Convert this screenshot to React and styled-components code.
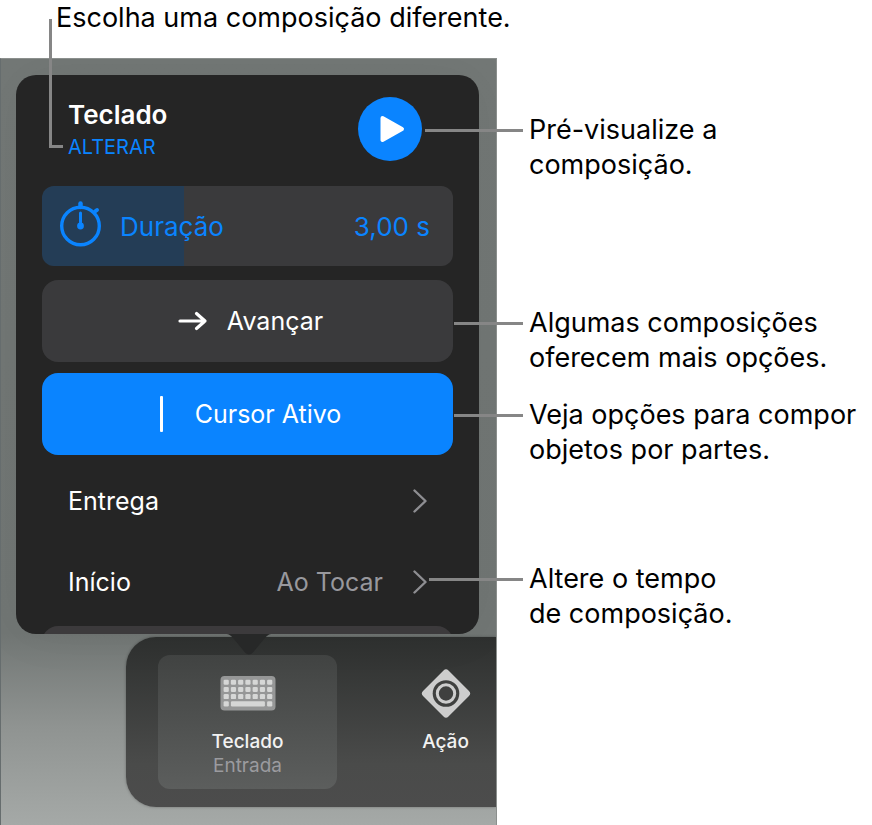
import React, { useState } from 'react';
import styled, { createGlobalStyle, css } from 'styled-components';

const BLUE = '#0a84ff';
const LEADER = '#868686';

const GlobalStyle = createGlobalStyle`
  *, *::before, *::after {
    box-sizing: border-box;
  }

  body {
    margin: 0;
    overflow-x: hidden;
    background: #fff;
    color: #000;
    font-family: Inter, Roboto, sans-serif;
    font-size: 25px;
  }

  button {
    border: none;
    padding: 0;
    background: transparent;
    font: inherit;
    cursor: pointer;
  }
`;

const Page = styled.main`
  min-height: 100vh;
`;

const TopNote = styled.p`
  position: relative;
  margin: 0;
  padding-left: 56px;
  height: 58px;
  font-size: 27px;
  line-height: 35px;

  &::before {
    content: '';
    position: absolute;
    z-index: 2;
    top: 19px;
    left: 49px;
    width: 14px;
    height: 129px;
    border-left: 3px solid ${LEADER};
    border-bottom: 3px solid ${LEADER};
  }
`;

const Columns = styled.div`
  display: grid;
  grid-template-columns: 497fr 375fr;
`;

const Screen = styled.section`
  overflow: hidden;
  padding: 16px 0 18px;
  border-top: 1px solid #8b8f8d;
  border-left: 1px solid #666d6e;
  border-right: 1px solid #8b8f8d;
  background: linear-gradient(#737876 0, #717674 75%, #8f9391 87%, #a5a9a7 100%);
`;

const Popover = styled.div`
  position: relative;
  z-index: 1;
  margin: 0 17px 3px 15px;
  border-radius: 20px;
  background: #252525;
  box-shadow: 0 0 50px rgba(0, 0, 0, 0.06);
`;

const PopoverBody = styled.div`
  overflow: hidden;
  padding: 0 26px;
  border-radius: 20px;
`;

const Tail = styled.svg`
  position: absolute;
  top: 100%;
  left: 50%;
  width: 48px;
  height: 21px;
  margin-left: -23px;
`;

const Header = styled.header`
  display: flex;
  justify-content: space-between;
  align-items: flex-start;
  padding: 22px 31px 25px 26px;
`;

const Title = styled.h1`
  margin: 0;
  color: #fff;
  font-size: 26px;
  font-weight: 600;
  line-height: 36px;
`;

const ChangeButton = styled.button`
  display: block;
  color: ${BLUE};
  font-size: 20px;
  line-height: 28px;
`;

const PlayButton = styled.button`
  flex: none;
  width: 64px;
  height: 64px;

  svg {
    display: block;
  }
`;

const DurationField = styled.div`
  position: relative;
  display: flex;
  align-items: center;
  height: 80px;
  margin-bottom: 14px;
  padding: 0 23px 0 17px;
  color: ${BLUE};
  font-size: 26px;

  svg, label, output {
    position: relative;
    pointer-events: none;
  }

  label {
    flex: 1;
    margin-left: 15px;
  }
`;

const DurationSlider = styled.input`
  position: absolute;
  inset: 0;
  width: 100%;
  height: 100%;
  margin: 0;
  appearance: none;
  border-radius: 12px;
  background: linear-gradient(to right, #243d56 var(--filled), #3a3a3c 0);
  cursor: pointer;

  &::-webkit-slider-thumb {
    appearance: none;
    width: 1px;
    height: 80px;
  }
`;

const OptionButton = styled.button`
  display: flex;
  justify-content: center;
  align-items: center;
  gap: ${props => props.$gap};
  width: 100%;
  height: 82px;
  margin-bottom: 11px;
  padding-left: 6px;
  border-radius: 16px;
  background: ${props => (props.$active ? BLUE : '#3a3a3c')};
  color: #fff;
`;

const List = styled.div`
  margin-top: -6px;
`;

const RowButton = styled.button`
  display: flex;
  align-items: center;
  width: 100%;
  height: 81px;
  padding: 0 26px;
  color: #fff;
  text-align: left;
`;

const RowLabel = styled.span`
  flex: 1;
`;

const RowValue = styled.span`
  margin-right: 30px;
  color: #98989d;
`;

const NextOption = styled.div`
  overflow: hidden;
  height: 12px;
  padding-top: 4px;

  &::before {
    content: '';
    display: block;
    height: 40px;
    border-radius: 16px;
    background: #3c3a3c;
  }
`;

const Toolbar = styled.nav`
  display: flex;
  gap: 19px;
  margin-left: 125px;
  padding: 18px 0 18px 32px;
  border-radius: 30px 0 0 30px;
  background: linear-gradient(#2e302f, #4a4b4a 75%, #4c4c4c);
  box-shadow: 0 0 3px rgba(0, 0, 0, 0.3);
`;

const ToolbarItem = styled.button`
  display: flex;
  flex: none;
  flex-direction: column;
  align-items: center;
  width: 179px;
  height: 134px;
  padding-top: 10px;
  border-radius: 12px;
  color: #f2f2f2;
  font-size: 19px;
  font-weight: 500;
  line-height: 24px;
  ${props => props.$selected && css`
    background: linear-gradient(#424443, #5c5e5d);
  `};

  svg {
    margin-bottom: 9px;
  }
`;

const ItemDetail = styled.span`
  color: #9b9b9f;
  font-weight: 400;
`;

const Notes = styled.aside`
  padding-left: 32px;
  font-size: 27px;
`;

const Note = styled.p`
  position: relative;
  margin: ${props => props.$space} 0 0;
  line-height: 35px;
  white-space: nowrap;

  &::before {
    content: '';
    position: absolute;
    z-index: 2;
    top: 17px;
    right: calc(100% + 6px);
    width: ${props => props.$leader};
    height: 3px;
    background: ${LEADER};
  }
`;

const PlayIcon = () => (
  <svg width="64" height="64" viewBox="0 0 64 64" aria-hidden="true">
    <circle cx="32" cy="32" r="32" fill={BLUE} />
    <path d="M24.5 21 L44 32 L24.5 43 Z" fill="#fff" stroke="#fff" strokeWidth="4" strokeLinejoin="round" />
  </svg>
);

const TimerIcon = () => (
  <svg width="46" height="50" viewBox="0 0 46 50" fill="none" stroke={BLUE} strokeLinecap="round" aria-hidden="true">
    <circle cx="21.5" cy="25" r="18.8" strokeWidth="3.4" />
    <path d="M21.5 2.5V6" strokeWidth="4.5" />
    <path d="M36 10.5L38 9" strokeWidth="4" />
    <path d="M21.5 12V24" strokeWidth="3" />
    <circle cx="21.5" cy="25" r="3.4" fill={BLUE} stroke="none" />
  </svg>
);

const ArrowIcon = () => (
  <svg width="30" height="20" viewBox="0 0 30 20" fill="none" stroke="#fff" strokeWidth="3.2" strokeLinecap="round" strokeLinejoin="round" aria-hidden="true">
    <path d="M2 10H27M18.5 2.5L27 10L18.5 17.5" />
  </svg>
);

const CaretIcon = () => (
  <svg width="3" height="36" viewBox="0 0 3 36" aria-hidden="true">
    <rect width="3" height="36" rx="1" fill="#fff" />
  </svg>
);

const Chevron = () => (
  <svg width="14" height="24" viewBox="0 0 14 24" fill="none" stroke="#8e8e92" strokeWidth="2.4" strokeLinecap="round" strokeLinejoin="round" aria-hidden="true">
    <path d="M1.5 1.5L12.5 12L1.5 22.5" />
  </svg>
);

const KEYS = [0, 1, 2, 3, 4, 5, 6];

const KeyboardIcon = () => (
  <svg width="56" height="56" viewBox="0 0 56 56" aria-hidden="true">
    <rect x="0.5" y="11" width="55" height="34.5" rx="4" fill="#969797" />
    <g fill="#d6d7d6">
      {[0, 1, 2].map(row => KEYS.map(col => (
        <rect key={`${row}-${col}`} x={3.6 + (col * 7.25)} y={14.7 + (row * 7.2)} width="5.2" height="5" rx="1.2" />
      )))}
      <rect x="3.6" y="36.3" width="5.2" height="5.2" rx="1.2" />
      <rect x="10.9" y="36.3" width="34" height="5.2" rx="1.2" />
      <rect x="47.1" y="36.3" width="5.2" height="5.2" rx="1.2" />
    </g>
  </svg>
);

const ActionIcon = () => (
  <svg width="56" height="56" viewBox="0 0 56 56" aria-hidden="true">
    <rect x="10" y="10.5" width="36" height="36" rx="3.5" transform="rotate(45 28 28.5)" fill="#cdcdcd" />
    <circle cx="28" cy="28.5" r="13.3" fill="#3f403f" />
    <circle cx="28" cy="28.5" r="8.7" fill="none" stroke="#cdcdcd" strokeWidth="3" />
  </svg>
);

const App = () => {
  const [duration, setDuration] = useState(3);
  const [cursorOn, setCursorOn] = useState(true);

  return (
    <Page>
      <GlobalStyle />
      <TopNote>Escolha uma composição diferente.</TopNote>
      <Columns>
        <Screen>
          <Popover>
            <PopoverBody>
              <Header>
                <div>
                  <Title>Teclado</Title>
                  <ChangeButton type="button">ALTERAR</ChangeButton>
                </div>
                <PlayButton type="button" aria-label="Pré-visualizar">
                  <PlayIcon />
                </PlayButton>
              </Header>
              <DurationField>
                <DurationSlider
                  id="duration"
                  type="range"
                  min="0"
                  max="8.7"
                  step="0.05"
                  value={duration}
                  onChange={({ target }) => setDuration(Number(target.value))}
                  style={{ '--filled': `${(duration / 8.7) * 100}%` }}
                />
                <TimerIcon />
                <label htmlFor="duration">Duração</label>
                <output htmlFor="duration">{`${duration.toFixed(2).replace('.', ',')} s`}</output>
              </DurationField>
              <OptionButton type="button" $gap="19px">
                <ArrowIcon />
                Avançar
              </OptionButton>
              <OptionButton
                type="button"
                $gap="32px"
                $active={cursorOn}
                aria-pressed={cursorOn}
                onClick={() => setCursorOn(!cursorOn)}
              >
                <CaretIcon />
                Cursor Ativo
              </OptionButton>
              <List>
                <RowButton type="button">
                  <RowLabel>Entrega</RowLabel>
                  <Chevron />
                </RowButton>
                <RowButton type="button">
                  <RowLabel>Início</RowLabel>
                  <RowValue>Ao Tocar</RowValue>
                  <Chevron />
                </RowButton>
              </List>
              <NextOption />
            </PopoverBody>
            <Tail viewBox="0 0 48 21" aria-hidden="true">
              <path d="M0 0C5 0 6 2 9 5L20 18.5Q24 22.5 28 18.5L39 5C42 2 43 0 48 0Z" fill="#272828" />
            </Tail>
          </Popover>
          <Toolbar>
            <ToolbarItem type="button" $selected>
              <KeyboardIcon />
              <span>Teclado</span>
              <ItemDetail>Entrada</ItemDetail>
            </ToolbarItem>
            <ToolbarItem type="button">
              <ActionIcon />
              <span>Ação</span>
            </ToolbarItem>
          </Toolbar>
        </Screen>
        <Notes>
          <Note $space="54px" $leader="98px">
            Pré-visualize a
            <br />
            composição.
          </Note>
          <Note $space="123px" $leader="69px">
            Algumas composições
            <br />
            oferecem mais opções.
          </Note>
          <Note $space="22px" $leader="69px">
            Veja opções para compor
            <br />
            objetos por partes.
          </Note>
          <Note $space="94px" $leader="94px">
            Altere o tempo
            <br />
            de composição.
          </Note>
        </Notes>
      </Columns>
    </Page>
  );
};

export default App;
